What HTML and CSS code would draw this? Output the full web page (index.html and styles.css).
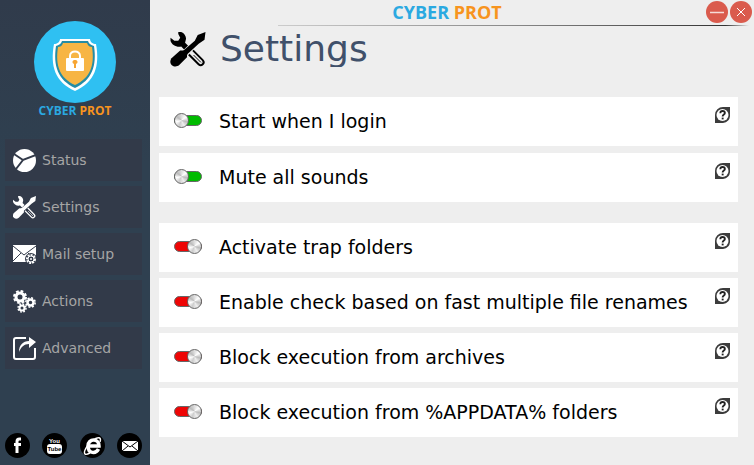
FILE: index.html
```html
<!DOCTYPE html>
<html lang="en">
<head>
    <meta charset="UTF-8">
    <meta name="viewport" content="width=device-width, initial-scale=1.0">
    <title>Cyber Prot</title>
    <link rel="stylesheet" href="styles.css">
</head>
<body>
    <!-- shared symbols -->
    <svg class="symbols" aria-hidden="true">
        <symbol id="tools" viewBox="0 0 36 36">
            <path d="M8 0h3c3 1 5 4 5 7l-1 4 5 5-4 4-5-5C6 16 1 13 0 9V6l4 3h4l2-3-2-4z" fill="currentColor"/>
            <path d="M21 21l10 10" stroke="currentColor" stroke-width="8" stroke-linecap="round"/>
            <path d="M20 20l11 11" stroke="var(--cut)" stroke-width="4" stroke-linecap="round"/>
            <path d="M24 24l7 7" stroke="currentColor" stroke-width="1" stroke-linecap="round"/>
            <path d="M9 28L28 9" stroke="var(--cut)" stroke-width="7"/>
            <path d="M25 9l3-6 8-3-1 8-6 4-14 13-4-4z" fill="currentColor"/>
            <path d="M10 19h4l3 4v3l-8 8c-5 4-12-1-8-7z" fill="currentColor"/>
        </symbol>
        <symbol id="help" viewBox="0 0 15 16">
            <path d="M8 0h7v8a7.500 7.500 0 0 1-7 8H0V8a8 8 0 0 1 8-8z" fill="#3c3c3c"/>
            <circle cx="7.500" cy="8" r="6" fill="#fff"/>
            <path d="M5.300 6.200c0-3 4.600-2.800 4.600-.2C9.900 7.600 7.600 7.500 7.600 9.500" fill="none" stroke="#222" stroke-width="1.800"/>
            <path d="M6.700 10.600h1.900v1.800H6.700z" fill="#222"/>
        </symbol>
    </svg>

    <div class="app">
        <aside class="sidebar">
            <div class="logo">
                <svg width="82" height="82" viewBox="0 0 82 82" aria-hidden="true">
                    <circle cx="41" cy="41" r="41" fill="#2fc0f2"/>
                    <path d="M26 18h30c0 3 3 5 6 5 4 22-1 38-21 47C21 61 16 45 20 23c3 0 6-2 6-5z" fill="#fff"/>
                    <path d="M28 20h26c1 3 3 4 6 5 3 20-2 34-19 42C24 59 19 45 22 25c3-1 5-2 6-5z" fill="#248ca6"/>
                    <path d="M29 22h24c1 3 3 4 5 4 3 19-2 31-17 38C26 57 21 45 24 26c2 0 4-1 5-4z" fill="#f7b544"/>
                    <path d="M36 39v-4c0-6 10-6 10 0v4" fill="none" stroke="#fff" stroke-width="2"/>
                    <rect x="32" y="37" width="18" height="13" rx="1" fill="#fff"/>
                    <path d="M41 39a2 2 0 0 1 1 4v4h-2v-4a2 2 0 0 1 1-4z" fill="#f7a532"/>
                </svg>
                <div class="brand"><span>CYBER</span> PROT</div>
            </div>

            <nav class="menu">
                <a href="#status">
                    <svg class="icon" viewBox="0 0 23 23" aria-hidden="true">
                        <circle cx="11.500" cy="11.500" r="11.500" fill="#fff"/>
                        <path d="M1 5l9 6 13-5M10 11l-7 9" fill="none" stroke="#323a49" stroke-width="2"/>
                    </svg>
                    Status
                </a>
                <a href="#settings">
                    <svg class="icon" aria-hidden="true"><use href="#tools"/></svg>
                    Settings
                </a>
                <a href="#mail">
                    <svg class="icon" viewBox="0 0 23 23" aria-hidden="true">
                        <path d="M0 2h23v17H0z" fill="#fff"/>
                        <path d="M0 3l11 9L23 3M0 18l8-8M23 18l-8-8" fill="none" stroke="#323a49"/>
                        <circle cx="18" cy="16" r="6" fill="#323a49"/>
                        <circle cx="18" cy="16" r="4" fill="none" stroke="#fff" stroke-width="2" stroke-dasharray="2 1"/>
                        <circle cx="18" cy="16" r="3" fill="#323a49" stroke="#fff"/>
                        <circle cx="18" cy="16" r="1" fill="#fff"/>
                    </svg>
                    Mail setup
                </a>
                <a href="#actions">
                    <svg class="icon" viewBox="0 0 23 23" fill="none" stroke="#fff" aria-hidden="true">
                        <circle cx="7" cy="7" r="4" stroke-width="3"/>
                        <circle cx="7" cy="7" r="6" stroke-width="2" stroke-dasharray="2.700 2"/>
                        <circle cx="17.500" cy="12.500" r="3" stroke-width="2.500"/>
                        <circle cx="17.500" cy="12.500" r="4.700" stroke-width="1.500" stroke-dasharray="2 1.700"/>
                        <circle cx="9" cy="18" r="2.500" stroke-width="2"/>
                        <circle cx="9" cy="18" r="4" stroke-width="1.500" stroke-dasharray="1.700 1.450"/>
                    </svg>
                    Actions
                </a>
                <a href="#advanced">
                    <svg class="icon" viewBox="0 0 23 23" aria-hidden="true">
                        <path d="M13 1H3a2 2 0 0 0-2 2v17a2 2 0 0 0 2 2h17a2 2 0 0 0 2-2v-9" fill="none" stroke="#fff" stroke-width="2"/>
                        <path d="M6 15C6 8 10 4 16 4V0l7 5-7 6V7c-5 0-8 3-10 8z" fill="#fff"/>
                    </svg>
                    Advanced
                </a>
            </nav>

            <div class="social">
                <a href="#facebook" aria-label="Facebook">
                    <svg viewBox="0 0 25 25" aria-hidden="true">
                        <circle cx="12.500" cy="12.500" r="12.500"/>
                        <path d="M16 6h-1.500Q12 6 12 8.500V20M9 11.500h7" fill="none" stroke="#fff" stroke-width="3"/>
                    </svg>
                </a>
                <a href="#youtube" aria-label="YouTube">
                    <svg viewBox="0 0 25 25" aria-hidden="true">
                        <circle cx="12.500" cy="12.500" r="12.500"/>
                        <rect x="5" y="11" width="15" height="10" rx="3" fill="#fff"/>
                        <text class="yt" x="12.500" y="10" fill="#fff" text-anchor="middle">You</text>
                        <text class="yt" x="12.500" y="18" text-anchor="middle">Tube</text>
                    </svg>
                </a>
                <a href="#web" aria-label="Website">
                    <svg viewBox="0 0 25 25" aria-hidden="true">
                        <circle cx="12.500" cy="12.500" r="12.500"/>
                        <path d="M8 13h11c0-8-11-8-11 0 0 8 8 8 10.500 3" fill="none" stroke="#fff" stroke-width="3.500"/>
                        <path d="M20 9c2-6-3-5-8-1-5 4-9 11-7 13 1 1 3 0 5-1" fill="none" stroke="#fff" stroke-width="1.500"/>
                    </svg>
                </a>
                <a href="#contact" aria-label="E-mail">
                    <svg viewBox="0 0 25 25" aria-hidden="true">
                        <circle cx="12.500" cy="12.500" r="12.500"/>
                        <path d="M5 8h16v10H5z" fill="#fff"/>
                        <path d="M5 8l8 6 8-6M5 18l6-5M21 18l-6-5" fill="none" stroke="#000"/>
                    </svg>
                </a>
            </div>
        </aside>

        <main class="content">
            <header class="titlebar">
                <div class="brand"><span>CYBER</span> PROT</div>
                <div class="window-buttons">
                    <button type="button" aria-label="Minimize">
                        <svg viewBox="0 0 22 22" aria-hidden="true"><path d="M4 11.500h14" stroke="#f6dcd8" stroke-width="1.500"/></svg>
                    </button>
                    <button type="button" aria-label="Close">
                        <svg viewBox="0 0 22 22" aria-hidden="true"><path d="M7 7l8 8M15 7l-8 8" stroke="#fff"/></svg>
                    </button>
                </div>
            </header>

            <div class="heading">
                <svg class="heading-icon" aria-hidden="true"><use href="#tools"/></svg>
                <h1>Settings</h1>
            </div>

            <form class="options">
                <div class="group general">
                    <div class="row">
                        <input type="checkbox" id="login" checked>
                        <label for="login">Start when I login</label>
                        <button type="button" class="help" aria-label="Help"><svg aria-hidden="true"><use href="#help"/></svg></button>
                    </div>
                    <div class="row">
                        <input type="checkbox" id="mute" checked>
                        <label for="mute">Mute all sounds</label>
                        <button type="button" class="help" aria-label="Help"><svg aria-hidden="true"><use href="#help"/></svg></button>
                    </div>
                </div>
                <div class="group">
                    <div class="row">
                        <input type="checkbox" id="trap">
                        <label for="trap">Activate trap folders</label>
                        <button type="button" class="help" aria-label="Help"><svg aria-hidden="true"><use href="#help"/></svg></button>
                    </div>
                    <div class="row">
                        <input type="checkbox" id="renames">
                        <label for="renames">Enable check based on fast multiple file renames</label>
                        <button type="button" class="help" aria-label="Help"><svg aria-hidden="true"><use href="#help"/></svg></button>
                    </div>
                    <div class="row">
                        <input type="checkbox" id="archives">
                        <label for="archives">Block execution from archives</label>
                        <button type="button" class="help" aria-label="Help"><svg aria-hidden="true"><use href="#help"/></svg></button>
                    </div>
                    <div class="row">
                        <input type="checkbox" id="appdata">
                        <label for="appdata">Block execution from %APPDATA% folders</label>
                        <button type="button" class="help" aria-label="Help"><svg aria-hidden="true"><use href="#help"/></svg></button>
                    </div>
                </div>
            </form>
        </main>
    </div>
</body>
</html>
```

FILE: styles.css
```css
* {
    box-sizing: border-box;
}
body {
    margin: 0;
    font-family: Verdana, "DejaVu Sans", sans-serif;
    background-color: #eee;
}
button {
    padding: 0;
    border: none;
    background: none;
    cursor: pointer;
}
svg {
    display: block;
}
.symbols {
    position: absolute;
    width: 0;
    height: 0;
}
.app {
    display: flex;
    min-height: 100vh;
}

/* sidebar */
.sidebar {
    flex: 0 0 150px;
    display: flex;
    flex-direction: column;
    padding: 21px 8px 7px 5px;
    background: linear-gradient(#303b4b, #2f4050 35%);
}
.logo {
    display: flex;
    flex-direction: column;
    align-items: center;
    padding-left: 3px;
}
.brand {
    font-family: "Segoe UI", "Open Sans", sans-serif;
    font-weight: bold;
    color: #f7941e;
}
.brand span {
    color: #2ba9e1;
}
.logo .brand {
    font-size: 12px;
    line-height: 16px;
}
.menu {
    display: flex;
    flex-direction: column;
    gap: 5px;
    margin-top: 20px;
}
.menu a {
    display: flex;
    align-items: center;
    gap: 6px;
    height: 42px;
    padding-left: 8px;
    background-color: #323a49;
    color: #a5a5a5;
    font-size: 14px;
    line-height: 18px;
    text-decoration: none;
}
.icon {
    --cut: #323a49;
    width: 23px;
    height: 23px;
    color: #fff;
}
.social {
    display: flex;
    justify-content: space-between;
    margin-top: auto;
}
.social svg {
    width: 25px;
    height: 25px;
}
.yt {
    font: bold 6px "Liberation Sans", Arial, sans-serif;
}

/* main area */
.content {
    flex: 1;
    min-width: 0;
}
.titlebar {
    display: grid;
    grid-template-columns: 1fr auto 1fr;
    height: 26px;
    padding-right: 2px;
    background: linear-gradient(90deg, #ccc, #888 50%, #333 95%, #eee) right 5px bottom / 78% 1px no-repeat;
}
.titlebar .brand {
    grid-column: 2;
    margin-right: 8px;
    font-size: 18px;
    line-height: 24px;
}
.window-buttons {
    display: flex;
    justify-content: flex-end;
    gap: 2px;
    padding-top: 1px;
}
.window-buttons button {
    width: 22px;
    height: 22px;
    border-radius: 50%;
    background-color: #da5b4d;
}
.heading {
    display: flex;
    align-items: flex-end;
    gap: 14px;
    height: 41px;
    padding-left: 20px;
    overflow: hidden;
}
.heading-icon {
    --cut: #eee;
    width: 36px;
    height: 35px;
    color: #000;
}
h1 {
    height: 41px;
    margin: 0;
    color: #40506a;
    font-size: 36px;
    font-weight: normal;
    line-height: 46px;
}
.options {
    display: flex;
    flex-direction: column;
    gap: 21px;
    padding: 30px 16px 28px 9px;
}
.group {
    display: flex;
    flex-direction: column;
    gap: 6px;
}
.general {
    gap: 7px;
}
.row {
    display: flex;
    align-items: center;
    height: 49px;
    padding: 0 8px 2px 15px;
    background-color: #fff;
}
.row label {
    flex: 1;
    margin-left: 17px;
    font-size: 19px;
}
.help {
    align-self: flex-start;
    margin-top: 10px;
}
.help svg {
    width: 15px;
    height: 16px;
}

/* switches */
.row input {
    appearance: none;
    display: flex;
    align-items: center;
    justify-content: flex-end;
    width: 28px;
    height: 11px;
    margin: 0;
    border: 1px solid #666;
    border-radius: 6px;
    background-color: #ee0505;
    cursor: pointer;
}
.row input:checked {
    justify-content: flex-start;
    background-color: #0b0;
}
.row input::before {
    content: "";
    flex: none;
    width: 13px;
    height: 13px;
    margin: 0 -1px;
    border: 1px solid #666;
    border-radius: 50%;
    background: conic-gradient(#ddd, #fff, #bbb, #eee, #ccc, #fff, #bbb, #ddd);
}
```
